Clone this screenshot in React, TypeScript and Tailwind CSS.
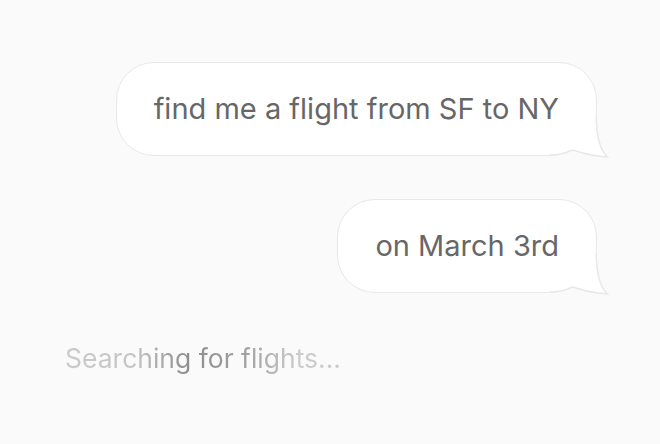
import React from 'react';

function Tail() {
  return (
    <svg
      className="absolute -right-[12px] -bottom-[2px] pointer-events-none"
      width="60"
      height="60"
      viewBox="0 0 60 60"
    >
      {/* hide the bubble's own corner under the tail */}
      <path
        d="M14 40 L30 26 L46.5 14 L47.25 18 C47.25 40 51 52 58.5 59 C48 58.5 36 56 23.5 52 C16 55.5 9 57.25 0 57.25 L0 54 Z"
        fill="#ffffff"
      />
      <path
        d="M0 57.9 C9 57.9 16 56.2 23.5 52.8 C36 56.8 48 59.3 58.5 59.8 L58.5 60 L0 60 Z"
        fill="#fafafa"
      />
      <path
        d="M47.25 18 C47.25 40 51 52 58.5 59 C48 58.5 36 56 23.5 52 C16 55.5 9 57.25 0 57.25"
        fill="none"
        stroke="#e8e8e8"
        strokeWidth="1.5"
      />
    </svg>
  );
}

function Bubble({ children }: { children: React.ReactNode }) {
  return (
    <div className="relative self-end">
      <div className="rounded-[38px] rounded-br-[16px] border-[1.5px] border-[#e8e8e8] bg-white px-[37px] py-[28px] text-[29px] leading-[36px] text-[#676767] whitespace-nowrap">
        {children}
      </div>
      <Tail />
    </div>
  );
}

export default function App() {
  return (
    <div
      className="w-[660px] h-[444px] bg-[#fafafa] overflow-hidden flex flex-col px-[63px] pt-[62px]"
      style={{ fontFamily: 'Inter, "Noto Sans", sans-serif' }}
    >
      <div className="flex flex-col gap-[43px]">
        <Bubble>find me a flight from SF to NY</Bubble>
        <Bubble>on March 3rd</Bubble>
      </div>
      <p className="mt-[49px] ml-[2px] text-[26.5px] leading-[32px] bg-[linear-gradient(90deg,#cbcbcb_0%,#c4c4c4_25%,#8e8e8e_45%,#a0a0a0_65%,#cbcbcb_85%,#cbcbcb_100%)] bg-clip-text text-transparent self-start">
        Searching for flights...
      </p>
    </div>
  );
}
